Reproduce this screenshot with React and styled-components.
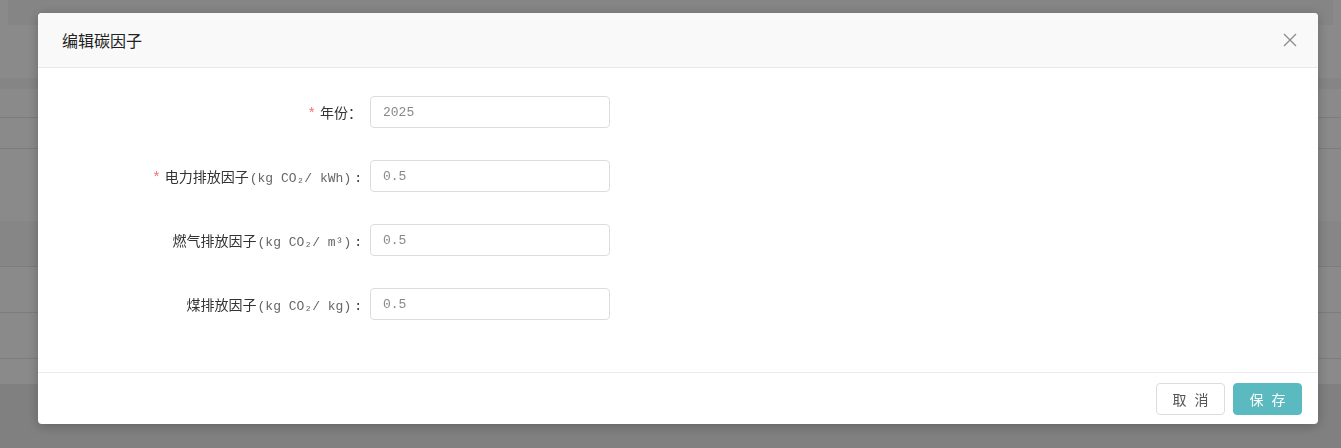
import React from "react";
import styled, { createGlobalStyle } from "styled-components";

const GlobalStyle = createGlobalStyle`
  html, body {
    margin: 0;
    padding: 0;
    height: 100%;
    background: #ededed;
    font-family: "Noto Sans CJK SC", "Noto Sans", sans-serif;
  }
`;

const Page = styled.div`
  height: 448px;
  display: flex;
  flex-direction: column;
  background: #fff;
  overflow: hidden;
`;

const TopBar = styled.div`
  height: 25px;
  margin: 0 8px;
  background: #f6f6f6;
  flex: none;
`;

const Spacer = styled.div`
  height: ${(p) => p.h}px;
  flex: none;
`;

const TableHead = styled.div`
  height: 11px;
  background: #f5f5f5;
  flex: none;
`;

const TableRow = styled.div`
  height: ${(p) => p.h}px;
  border-bottom: ${(p) => (p.line ? "1px solid #e6e6e6" : "none")};
  background: ${(p) => (p.shade ? "#f7f7f7" : "#fff")};
  flex: none;
`;

const PageFoot = styled.div`
  flex: 1;
  background: #ececec;
`;

const Overlay = styled.div`
  position: fixed;
  inset: 0;
  background: rgba(0, 0, 0, 0.46);
  display: flex;
  justify-content: flex-start;
  align-items: flex-start;
  padding: 13px 0 0 38px;
`;

const Modal = styled.div`
  width: 1280px;
  background: #fff;
  border-radius: 4px;
  box-shadow: 0 2px 12px rgba(0, 0, 0, 0.25);
  overflow: hidden;
`;

const Header = styled.div`
  height: 54px;
  padding: 0 24px;
  background: #f9f9f9;
  border-bottom: 1px solid #eaeaea;
  display: flex;
  align-items: center;
  justify-content: space-between;
`;

const Title = styled.span`
  font-size: 16px;
  color: #222;
`;

const CloseButton = styled.button`
  border: none;
  background: none;
  padding: 0;
  margin-right: -3px;
  display: flex;
  cursor: pointer;
`;

const Body = styled.div`
  padding: 28px 20px 20px;
  display: flex;
  flex-direction: column;
  gap: 32px;
  height: 304px;
  box-sizing: border-box;
`;

const FormItem = styled.div`
  display: flex;
  align-items: center;
  height: 32px;
`;

const Label = styled.label`
  width: 312px;
  box-sizing: border-box;
  padding-right: 8px;
  text-align: right;
  font-size: 14px;
  color: #333;
  white-space: nowrap;
`;

const Star = styled.span`
  color: #f56c6c;
  margin-right: 4px;
  font-family: "Liberation Mono", monospace;
`;

const Unit = styled.span`
  font-family: "Liberation Mono", monospace;
  font-size: 13px;
  color: #666;
  margin-left: 1px;
`;

const Colon = styled.span`
  font-family: "Liberation Mono", monospace;
  font-size: 13px;
  margin-left: 3px;
`;

const Input = styled.input`
  width: 240px;
  height: 32px;
  box-sizing: border-box;
  border: 1px solid #dcdcdc;
  border-radius: 4px;
  padding: 0 12px;
  font-family: "Liberation Mono", monospace;
  font-size: 13px;
  color: #888;
  outline: none;
`;

const Footer = styled.div`
  border-top: 1px solid #ebebeb;
  height: 51px;
  padding: 0 16px;
  display: flex;
  align-items: center;
  justify-content: flex-end;
  gap: 8px;
`;

const Button = styled.button`
  width: 69px;
  height: 32px;
  border-radius: 4px;
  font-family: "Noto Sans CJK SC", sans-serif;
  font-size: 14px;
  letter-spacing: 8px;
  text-indent: 8px;
  cursor: pointer;
  border: 1px solid ${(p) => (p.primary ? "#5bbac0" : "#dcdcdc")};
  background: ${(p) => (p.primary ? "#5bbac0" : "#fff")};
  color: ${(p) => (p.primary ? "#fff" : "#555")};
`;

const fields = [
  { name: "年份", unit: null, value: "2025", required: true },
  { name: "电力排放因子", unit: "(kg CO₂/ kWh)", value: "0.5", required: true },
  { name: "燃气排放因子", unit: "(kg CO₂/ m³)", value: "0.5" },
  { name: "煤排放因子", unit: "(kg CO₂/ kg)", value: "0.5" },
];

const App = () => {
  return (
    <>
      <GlobalStyle />
      <Page>
        <TopBar />
        <Spacer h={53} />
        <TableHead />
        <TableRow h={28} line />
        <TableRow h={30} line />
        <TableRow h={72} />
        <TableRow h={45} line shade />
        <TableRow h={45} line />
        <TableRow h={45} line />
        <TableRow h={25} />
        <PageFoot />
      </Page>
      <Overlay>
        <Modal>
          <Header>
            <Title>编辑碳因子</Title>
            <CloseButton aria-label="close">
              <svg width="14" height="14" viewBox="0 0 14 14">
                <path d="M1 1L13 13M13 1L1 13" stroke="#8c8c8c" strokeWidth="1.3" />
              </svg>
            </CloseButton>
          </Header>
          <Body>
            {fields.map((f) => (
              <FormItem key={f.name}>
                <Label>
                  {f.required && <Star>*</Star>}
                  {f.name}
                  {f.unit && <Unit>{f.unit}</Unit>}
                  {f.unit ? <Colon>:</Colon> : "："}
                </Label>
                <Input defaultValue={f.value} />
              </FormItem>
            ))}
          </Body>
          <Footer>
            <Button>取消</Button>
            <Button primary>保存</Button>
          </Footer>
        </Modal>
      </Overlay>
    </>
  );
};

export default App;
